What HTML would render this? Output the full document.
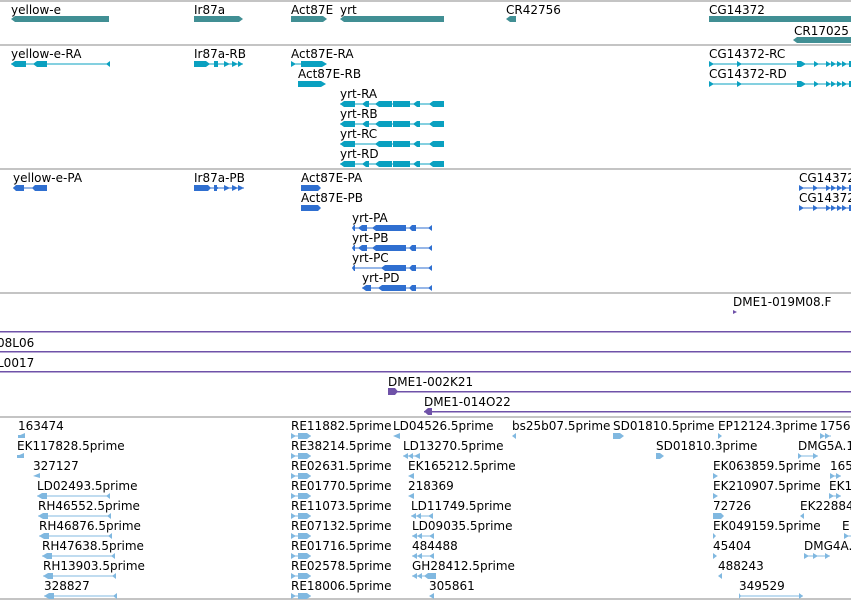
<!DOCTYPE html>
<html><head><meta charset="utf-8"><style>
html,body{margin:0;padding:0;background:#fff;}
svg{display:block;font-family:"DejaVu Sans","Liberation Sans",sans-serif;font-size:12px;}
</style></head><body>
<svg width="851" height="601" xmlns="http://www.w3.org/2000/svg">
<g fill="#c4c4c4">
<rect x="0" y="0" width="851" height="2"/>
<rect x="0" y="44" width="851" height="2"/>
<rect x="0" y="168" width="851" height="2"/>
<rect x="0" y="292" width="851" height="2"/>
<rect x="0" y="416" width="851" height="2"/>
<rect x="0" y="598" width="851" height="2"/>
</g>
<g fill="#000">
<text x="11" y="14">yellow-e</text><text x="194" y="14">Ir87a</text><text x="291" y="14">Act87E</text><text x="340" y="14">yrt</text><text x="506" y="14">CR42756</text><text x="709" y="14">CG14372</text><text x="794" y="35">CR17025</text>
</g>
<g fill="#418f94">
<polygon points="11,19 15,16 109,16 109,22 15,22"/>
<polygon points="194,16 239,16 243,19 239,22 194,22"/>
<polygon points="291,16 323,16 327,19 323,22 291,22"/>
<polygon points="340,19 344,16 444,16 444,22 344,22"/>
<polygon points="506,19 510,16 516,16 516,22 510,22"/>
<rect x="709" y="16" width="142" height="6"/>
<polygon points="793,40 797,37 851,37 851,43 797,43"/>
</g>
<g fill="#000">
<text x="11" y="58">yellow-e-RA</text><text x="194" y="58">Ir87a-RB</text><text x="291" y="58">Act87E-RA</text><text x="298" y="78">Act87E-RB</text>
<text x="340" y="98">yrt-RA</text><text x="340" y="118">yrt-RB</text><text x="340" y="138">yrt-RC</text><text x="340" y="158">yrt-RD</text>
<text x="709" y="58">CG14372-RC</text><text x="709" y="78">CG14372-RD</text>
</g>
<g fill="#0aa0c0">
<rect x="11" y="63.5" width="99" height="1"/>
<polygon points="11,64 15,61 26,61 26,67 15,67"/><polygon points="33,64 37,61 47,61 47,67 37,67"/><polygon points="106,64 110,61 110,67"/>
<polygon points="194,61 206,61 210,64 206,67 194,67"/><polygon points="214,61 218,64 214,67"/><rect x="214" y="61" width="4" height="6"/><polygon points="224,61 230,64 224,67"/><polygon points="232,61 238,64 232,67"/><polygon points="238,61 243,64 238,67"/><rect x="194" y="63.5" width="49" height="1"/>
<polygon points="291,61 296,64 291,67"/><rect x="291" y="63.5" width="10" height="1"/><polygon points="301,61 322,61 327,64 322,67 301,67"/>
<polygon points="298,81 321,81 326,84 321,87 298,87"/>
<g id="yrt">
<rect x="340" y="103.5" width="104" height="1"/>
<polygon points="340,104 344,101 355,101 355,107 344,107"/><polygon points="362,104 366,101 369,101 369,107 366,107"/>
<polygon points="375,104 379,101 392,101 392,107 379,107"/><rect x="393" y="101" width="17" height="6"/>
<polygon points="413,104 417,101 420,101 420,107 417,107"/><polygon points="429,104 433,101 444,101 444,107 433,107"/>
</g>
<use href="#yrt" y="20"/>
<rect x="340" y="143.5" width="104" height="1"/><polygon points="340,144 344,141 355,141 355,147 344,147"/><polygon points="375,144 379,141 392,141 392,147 379,147"/><rect x="393" y="141" width="17" height="6"/><polygon points="413,144 417,141 420,141 420,147 417,147"/><polygon points="429,144 433,141 444,141 444,147 433,147"/>
<use href="#yrt" y="60"/>
<g id="cg">
<rect x="709" y="63.5" width="142" height="1"/>
<polygon points="709,61 714,64 709,67"/><polygon points="737,61 742,64 737,67"/><rect x="797" y="61" width="4" height="6"/><polygon points="801,61 806,64 801,67"/>
<polygon points="814,61 819,64 814,67"/><polygon points="826,61 831,64 826,67"/><polygon points="831,61 836,64 831,67"/><polygon points="837,61 842,64 837,67"/><polygon points="842,61 847,64 842,67"/><rect x="849" y="61" width="2" height="6"/>
</g>
<use href="#cg" y="20"/>
</g>
<g fill="#000">
<text x="13" y="182">yellow-e-PA</text><text x="194" y="182">Ir87a-PB</text><text x="301" y="182">Act87E-PA</text><text x="301" y="202">Act87E-PB</text>
<text x="352" y="222">yrt-PA</text><text x="352" y="242">yrt-PB</text><text x="352" y="262">yrt-PC</text><text x="362" y="282">yrt-PD</text>
<text x="799" y="182">CG14372</text><text x="799" y="202">CG14372</text>
</g>
<g fill="#2f6fd0">
<rect x="13" y="187.5" width="34" height="1"/><polygon points="13,188 16,185 24,185 24,191 16,191"/><polygon points="32,188 35,185 47,185 47,191 35,191"/>
<rect x="194" y="187.5" width="50" height="1"/><polygon points="194,185 208,185 211,188 208,191 194,191"/><polygon points="214,185 219,188 214,191"/><rect x="214" y="185" width="3" height="6"/><polygon points="224,185 230,188 224,191"/><polygon points="232,185 238,188 232,191"/><polygon points="238,185 244,188 238,191"/>
<polygon points="301,185 318,185 321,188 318,191 301,191"/><polygon points="301,205 318,205 321,208 318,211 301,211"/>
<g id="yp">
<rect x="352" y="227.5" width="80" height="1"/><polygon points="352,228 354,225 355,225 355,231 354,231"/><polygon points="358,228 362,225 367,225 367,231 362,231"/>
<polygon points="372,228 376,225 393,225 393,231 376,231"/><rect x="393" y="225" width="13" height="6"/><polygon points="409,228 412,225 416,225 416,231 412,231"/><polygon points="428,228 432,225 432,231"/>
</g>
<use href="#yp" y="20"/>
<rect x="352" y="267.5" width="80" height="1"/><polygon points="352,268 354,265 355,265 355,271 354,271"/><polygon points="381,268 385,265 393,265 393,271 385,271"/><rect x="393" y="265" width="13" height="6"/><polygon points="409,268 412,265 416,265 416,271 412,271"/><polygon points="428,268 432,265 432,271"/>
<rect x="362" y="287.5" width="70" height="1"/><polygon points="362,288 366,285 371,285 371,291 366,291"/><polygon points="378,288 382,285 393,285 393,291 382,291"/><rect x="393" y="285" width="13" height="6"/><polygon points="409,288 412,285 416,285 416,291 412,291"/><polygon points="428,288 432,285 432,291"/>
<g id="cgp"><rect x="799" y="187.5" width="52" height="1"/><polygon points="799,185 804,188 799,191"/><polygon points="813,185 818,188 813,191"/><polygon points="826,185 831,188 826,191"/><polygon points="831,185 836,188 831,191"/><polygon points="837,185 842,188 837,191"/><polygon points="842,185 847,188 842,191"/><rect x="849" y="185" width="2" height="6"/></g>
<use href="#cgp" y="20"/>
</g>
<g fill="#000">
<text x="733" y="306">DME1-019M08.F</text>
<text x="-3" y="347">08L06</text><text x="-3" y="367">L0017</text>
<text x="388" y="386">DME1-002K21</text><text x="424" y="406">DME1-014O22</text>
</g>
<g fill="#6f52a8">
<polygon points="733,310 737,312 733,314"/>
<rect x="0" y="331" width="851" height="1.5"/><rect x="0" y="351" width="851" height="1.5"/><rect x="0" y="371" width="851" height="1.5"/>
<rect x="388" y="391" width="463" height="1.5"/><polygon points="388,388 395,388 398,391.5 395,395 388,395"/>
<rect x="424" y="411" width="427" height="1.5"/><polygon points="424,411.5 428,408 432,408 432,415 428,415"/>
</g>
<g fill="#000">
<text x="18" y="430">163474</text><text x="17" y="450">EK117828.5prime</text><text x="33" y="470">327127</text><text x="37" y="490">LD02493.5prime</text><text x="38" y="510">RH46552.5prime</text><text x="39" y="530">RH46876.5prime</text><text x="42" y="550">RH47638.5prime</text><text x="43" y="570">RH13903.5prime</text><text x="44" y="590">328827</text>
<text x="291" y="430">RE11882.5prime</text><text x="291" y="450">RE38214.5prime</text><text x="291" y="470">RE02631.5prime</text><text x="291" y="490">RE01770.5prime</text><text x="291" y="510">RE11073.5prime</text><text x="291" y="530">RE07132.5prime</text><text x="291" y="550">RE01716.5prime</text><text x="291" y="570">RE02578.5prime</text><text x="291" y="590">RE18006.5prime</text>
<text x="393" y="430">LD04526.5prime</text><text x="403" y="450">LD13270.5prime</text><text x="408" y="470">EK165212.5prime</text><text x="408" y="490">218369</text><text x="411" y="510">LD11749.5prime</text><text x="412" y="530">LD09035.5prime</text><text x="412" y="550">484488</text><text x="412" y="570">GH28412.5prime</text><text x="429" y="590">305861</text>
<text x="512" y="430">bs25b07.5prime</text><text x="613" y="430">SD01810.5prime</text><text x="656" y="450">SD01810.3prime</text>
<text x="718" y="430">EP12124.3prime</text><text x="820" y="430">1756</text><text x="798" y="450">DMG5A.1</text>
<text x="713" y="470">EK063859.5prime</text><text x="830" y="470">165</text><text x="713" y="490">EK210907.5prime</text><text x="829" y="490">EK1</text>
<text x="713" y="510">72726</text><text x="800" y="510">EK22884</text><text x="713" y="530">EK049159.5prime</text><text x="842" y="530">E</text>
<text x="713" y="550">45404</text><text x="804" y="550">DMG4A.</text><text x="718" y="570">488243</text><text x="739" y="590">349529</text>
</g>
<g fill="#80b8e0">
<polygon points="18,436 25,433 25,438"/><rect x="18" y="435" width="7" height="3"/>
<polygon points="17,456 24,453 24,458"/><rect x="17" y="455" width="7" height="3"/>
<polygon points="33,476 40,473 40,478"/>
<g id="ll"><rect x="37" y="495.5" width="73" height="1"/><polygon points="37,496 42,493 47,493 47,499 42,499"/><polygon points="106,496 110,493 110,499"/></g>
<use href="#ll" x="1" y="20"/><use href="#ll" x="2" y="40"/><use href="#ll" x="5" y="60"/><use href="#ll" x="6" y="80"/><use href="#ll" x="7" y="100"/>
<g id="re"><rect x="291" y="435.5" width="20" height="1"/><polygon points="291,433 296,436 291,439"/><polygon points="298,433 307,433 311,436 307,439 298,439"/></g>
<use href="#re" y="20"/><use href="#re" y="40"/><use href="#re" y="60"/><use href="#re" y="80"/><use href="#re" y="100"/><use href="#re" y="120"/><use href="#re" y="140"/><use href="#re" y="160"/>
<polygon points="393,436 400,433 400,439"/>
<rect x="403" y="455.5" width="17" height="1"/><polygon points="403,456 408,453 408,459"/><polygon points="408,456 413,453 413,459"/><polygon points="414,456 420,453 420,459"/>
<polygon points="408,476 414,473 414,479"/><polygon points="408,496 414,493 414,499"/>
<g id="ld"><rect x="411" y="515.5" width="22" height="1"/><polygon points="411,516 416,513 416,519"/><polygon points="416,516 421,513 421,519"/><polygon points="428,516 433,513 433,519"/></g>
<use href="#ld" x="1" y="20"/><use href="#ld" x="1" y="40"/>
<rect x="412" y="575.5" width="24" height="1"/><polygon points="412,576 417,573 417,579"/><polygon points="417,576 422,573 422,579"/><polygon points="424,576 428,573 436,573 436,579 428,579"/>
<polygon points="429,596 434,593 434,599"/>
<polygon points="512,436 516,433 516,439"/>
<polygon points="613,433 620,433 624,436 620,439 613,439"/><polygon points="656,453 660,453 664,456 660,459 656,459"/>
<polygon points="718,433 722,436 718,439"/><polygon points="820,433 825,436 820,439"/><polygon points="825,433 830,436 825,439"/><rect x="820" y="435.5" width="11" height="1"/>
<rect x="798" y="455.5" width="20" height="1"/><polygon points="798,453 802,456 798,459"/><polygon points="813,453 818,456 813,459"/>
<polygon points="713,473 718,476 713,479"/><polygon points="713,493 718,496 713,499"/><polygon points="713,513 721,513 724,516 721,519 713,519"/>
<polygon points="713,533 716,536 713,539"/><polygon points="713,553 717,556 713,559"/><polygon points="718,576 722,573 722,579"/>
<polygon points="830,473 835,476 830,479"/><polygon points="836,473 841,476 836,479"/><rect x="830" y="475.5" width="11" height="1"/>
<polygon points="829,493 834,496 829,499"/><polygon points="836,493 841,496 836,499"/><rect x="829" y="495.5" width="12" height="1"/>
<polygon points="800,516 804,513 804,519"/>
<polygon points="844,533 849,536 844,539"/><rect x="844" y="535.5" width="7" height="1"/>
<rect x="804" y="555.5" width="26" height="1"/><polygon points="804,553 809,556 804,559"/><polygon points="813,553 818,556 813,559"/><polygon points="825,553 830,556 825,559"/>
<rect x="739" y="595.5" width="64" height="1"/><polygon points="739,593 741,596 739,599"/><polygon points="799,593 803,596 799,599"/>
</g>
</svg>
</body></html>
